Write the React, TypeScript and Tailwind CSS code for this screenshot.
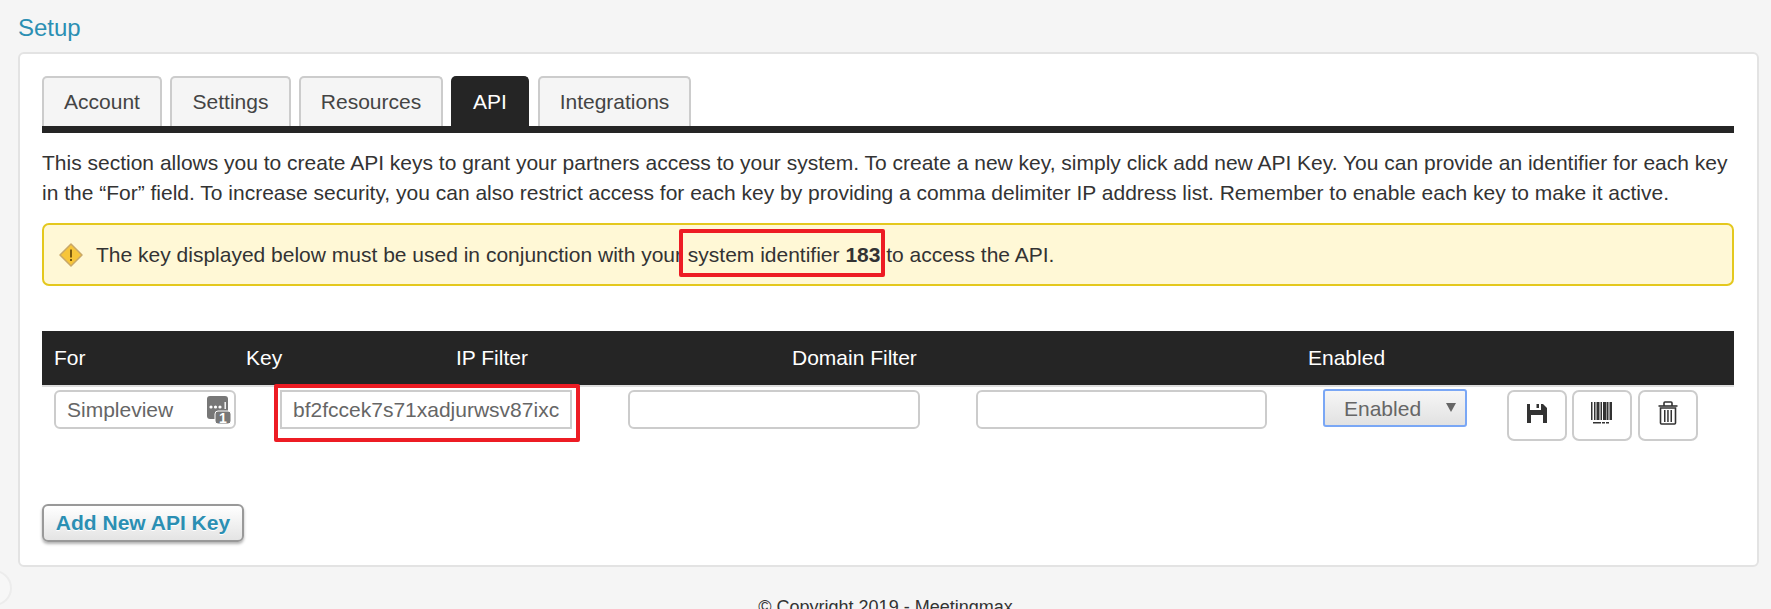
import React from 'react';

const tabs = ['Account', 'Settings', 'Resources', 'API', 'Integrations'];
const tabWidths: Record<string, string> = {
  Account: 'w-[120px]',
  Settings: 'w-[121px]',
  Resources: 'w-[144px]',
  API: 'w-[78px]',
  Integrations: 'ml-[1px] w-[153px]',
};

const WarningIcon = () => (
  <svg width="24" height="24" viewBox="0 0 24 24" className="shrink-0">
    <path d="M12 1 L23 12 L12 23 L1 12 Z" fill="#f7c53a" stroke="#c9a868" strokeWidth="1.5" strokeLinejoin="round" />
    <rect x="11" y="6.5" width="2" height="8" fill="#7a5a10" />
    <rect x="11" y="16" width="2" height="2" fill="#7a5a10" />
  </svg>
);

const KeyCountIcon = () => (
  <svg width="26" height="28" viewBox="0 0 26 28" className="shrink-0">
    <rect x="0" y="0" width="21" height="23" rx="3" fill="#777" />
    <circle cx="4" cy="11" r="1.6" fill="#fff" />
    <circle cx="8.5" cy="11" r="1.6" fill="#fff" />
    <circle cx="13" cy="11" r="1.6" fill="#fff" />
    <rect x="17.5" y="6" width="1.4" height="7" fill="#fff" />
    <rect x="8" y="15" width="16" height="13" rx="3" fill="#777" stroke="#fff" strokeWidth="1" />
    <text x="16" y="26.5" fontSize="14" fontWeight="700" fill="#fff" textAnchor="middle" fontFamily="Liberation Sans">1</text>
  </svg>
);

const SaveIcon = () => (
  <svg width="20" height="20" viewBox="0 0 20 20">
    <path d="M0 1 H3 V7 H14 V1 H16 L20 5 V20 H16 V12 H4 V20 H0 Z" fill="#333" />
    <rect x="9.5" y="1" width="2.5" height="4" fill="#333" />
  </svg>
);

const BarcodeIcon = () => (
  <svg width="22" height="22" viewBox="0 0 22 22">
    <rect x="0" y="0" width="1.5" height="18" fill="#333" />
    <rect x="3" y="0" width="1.5" height="18" fill="#333" />
    <rect x="5.5" y="0" width="3" height="18" fill="#333" />
    <rect x="9.5" y="0" width="1.5" height="18" fill="#333" />
    <rect x="12" y="0" width="3.5" height="18" fill="#333" />
    <rect x="16" y="0" width="1.5" height="18" fill="#333" />
    <rect x="18.5" y="0" width="2.5" height="18" fill="#333" />
    <rect x="2" y="20" width="8" height="1.5" fill="#333" />
    <rect x="11" y="20" width="3" height="1.5" fill="#333" />
    <rect x="15" y="20" width="3" height="1.5" fill="#333" />
  </svg>
);

const TrashIcon = () => (
  <svg width="20" height="24" viewBox="0 0 20 24">
    <path d="M0.5 5 H19.5" stroke="#333" strokeWidth="1.6" />
    <path d="M6 5 V2 Q6 1 7 1 H13 Q14 1 14 2 V5" stroke="#333" strokeWidth="1.6" fill="none" />
    <path d="M2.5 7 H17.5 V22 Q17.5 23 16.5 23 H3.5 Q2.5 23 2.5 22 Z" stroke="#333" strokeWidth="1.6" fill="none" />
    <rect x="6" y="9" width="1.5" height="12" fill="#333" />
    <rect x="9.2" y="9" width="1.5" height="12" fill="#333" />
    <rect x="12.5" y="9" width="1.5" height="12" fill="#333" />
  </svg>
);

export default function App() {
  return (
    <div className="relative h-[609px] overflow-hidden bg-[#f5f5f5] font-['Liberation_Sans',Arial,sans-serif] text-[#333]">
      <h1 className="h-[52px] pl-[18px] pt-[13px] text-[24px] leading-[30px] font-normal text-[#2b8fb3]">Setup</h1>

      <div className="relative ml-[18px] mr-[12px] h-[515px] rounded-[6px] border-2 border-[#e3e3e3] bg-white pl-[22px] pr-[23px] pt-[22px]">
        <div className="flex h-[50px] items-end gap-[8px]">
          {tabs.map((t) =>
            t === 'API' ? (
              <div key={t} className={`${tabWidths[t]} flex h-[50px] items-center justify-center rounded-t-[5px] border-2 border-b-0 border-t-[#252525] border-x-[#252525] bg-[#252525] text-[21px] text-white`}>
                {t}
              </div>
            ) : (
              <div key={t} className={`${tabWidths[t]} flex h-[50px] items-center justify-center rounded-t-[5px] border-2 border-b-0 border-[#ccc] bg-[#f5f5f5] text-[21px] text-[#444]`}>
                {t}
              </div>
            ),
          )}
        </div>
        <div className="h-[7px] bg-[#252525]" />

        <p className="mt-[15px] text-[21px] leading-[30px]">
          This section allows you to create API keys to grant your partners access to your system. To create a new key, simply click add new API Key. You can provide an identifier for each key in the “For” field. To increase security, you can also restrict access for each key by providing a comma delimiter IP address list. Remember to enable each key to make it active.
        </p>

        <div className="relative mt-[15px] flex h-[63px] items-center gap-[13px] rounded-[7px] border-2 border-[#e4c81e] bg-[#fff8d6] pl-[15px] text-[21px]">
          <WarningIcon />
          <span>
            The key displayed below must be used in conjunction with your system identifier <b>183</b> to access the API.
          </span>
          <div className="absolute left-[635px] top-[4px] h-[48px] w-[206px] rounded-[2px] border-[4px] border-[#ed1c24]" />
        </div>

        <div className="mt-[45px] grid h-[54px] grid-cols-[192px_210px_336px_516px_1fr] items-center bg-[#252525] pl-[12px] text-[21px] text-white">
          <span>For</span>
          <span>Key</span>
          <span>IP Filter</span>
          <span>Domain Filter</span>
          <span>Enabled</span>
        </div>

        <div className="relative flex items-start border-t-2 border-[#ddd] pl-[12px] pt-[3px]">
          <div className="flex h-[39px] w-[182px] items-center justify-between rounded-[6px] border-2 border-[#ccc] pl-[11px] pr-[1px] text-[21px] text-[#666]">
            <span>Simpleview</span>
            <KeyCountIcon />
          </div>
          <div className="ml-[44px] flex h-[39px] w-[292px] items-center overflow-hidden border-2 border-[#ccc] pl-[11px] text-[21px] text-[#666]">
            bf2fccek7s71xadjurwsv87ixc
          </div>
          <div className="ml-[56px] h-[39px] w-[292px] rounded-[6px] border-2 border-[#ccc]" />
          <div className="ml-[56px] h-[39px] w-[291px] rounded-[6px] border-2 border-[#ccc]" />
          <div className="relative ml-[56px] -mt-px flex h-[38px] w-[144px] items-center rounded-[3px] border-2 border-[#7aa7f5] bg-gradient-to-b from-[#f6f6f6] to-[#e2e2e2] pl-[19px] pt-[1px] text-[21px] text-[#666]">
            Enabled
            <span className="absolute right-[9px] top-[12px] h-0 w-0 border-x-[5px] border-t-[9px] border-x-transparent border-t-[#666]" />
          </div>
          <div className="ml-[40px] flex gap-[5px]">
            <button className="flex h-[51px] w-[60px] items-center justify-center rounded-[7px] border-2 border-[#ccc] pb-[5px]"><SaveIcon /></button>
            <button className="flex h-[51px] w-[60px] items-center justify-center rounded-[7px] border-2 border-[#ccc] pb-[5px]"><BarcodeIcon /></button>
            <button className="ml-[1px] flex h-[51px] w-[60px] items-center justify-center rounded-[7px] border-2 border-[#ccc] pb-[5px]"><TrashIcon /></button>
          </div>
          <div className="absolute left-[232px] top-[-3px] h-[58px] w-[306px] rounded-[2px] border-[4px] border-[#ed1c24]" />
        </div>

        <button className="mt-[63px] flex h-[38px] w-[202px] items-center justify-center rounded-[6px] border-2 border-[#999] bg-gradient-to-b from-white to-[#e4e4e4] text-[21px] font-bold text-[#2b8fb3] shadow-[0_2px_3px_rgba(0,0,0,0.3)] [text-shadow:0_1px_0_#fff]">
          Add New API Key
        </button>
      </div>

      <div className="absolute left-[-24px] top-[570px] h-[36px] w-[36px] rounded-full border-2 border-[#ececec] bg-[#f7f7f7]" />
      <div className="mt-[30px] text-center text-[18px] leading-[20px] text-[#333]">© Copyright 2019 - Meetingmax</div>
    </div>
  );
}
